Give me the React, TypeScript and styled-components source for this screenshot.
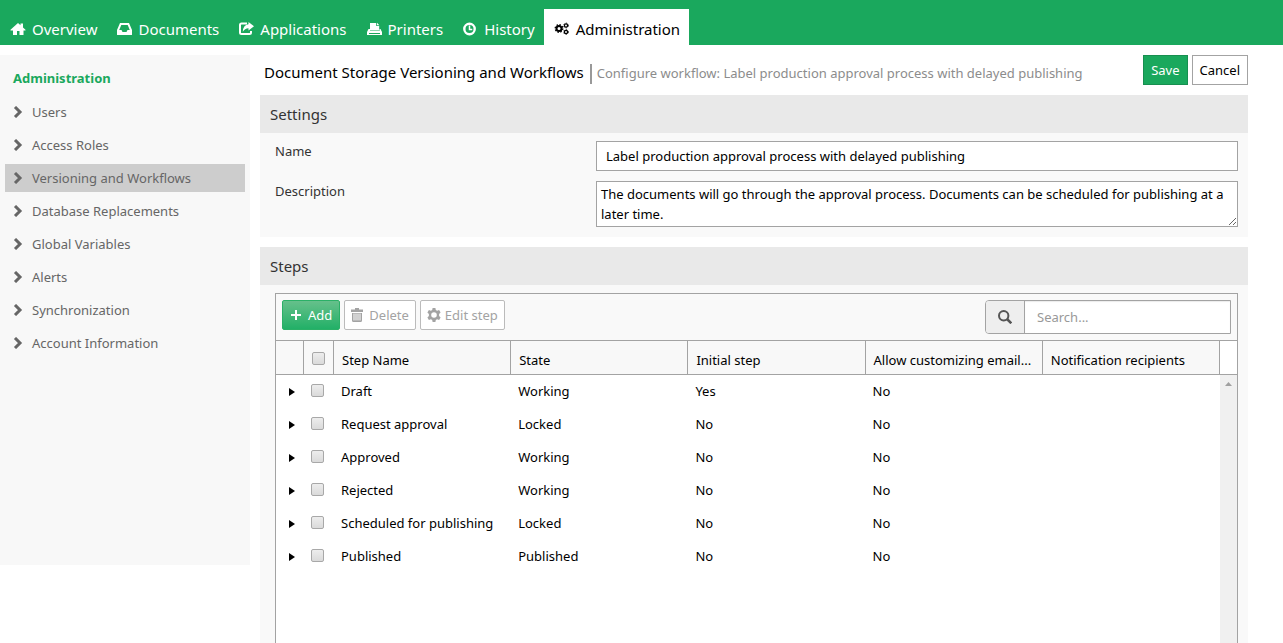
import React, { useState } from 'react';
import styled, { createGlobalStyle } from 'styled-components';

const green = '#1aa85d';
const line = '#a3a3a3';
const fontStack = '"Noto Sans", "Open Sans", sans-serif';

const GlobalStyle = createGlobalStyle`
  *, *::before, *::after { box-sizing: border-box; }
  body { margin: 0; background: #fff; color: #000; font: 13px/20px ${fontStack}; }
  button, input, textarea { font: inherit; color: inherit; border-radius: 0; }
`;

const Page = styled.div`
  display: flex;
  flex-direction: column;
  min-height: 100vh;
`;

const TopBar = styled.nav`
  display: flex;
  align-items: flex-end;
  height: 45px;
  background: ${green};
`;

const Tab = styled.a<{ $active?: boolean }>`
  display: flex;
  align-items: center;
  gap: 6px;
  height: 36px;
  padding: 4px 9px 0 10px;
  font-size: 15px;
  text-decoration: none;
  white-space: nowrap;
  color: ${(p) => (p.$active ? '#000' : '#fff')};
  background: ${(p) => (p.$active ? '#fff' : 'transparent')};
`;

const TabIcon = styled.svg`
  flex: none;
  width: 16px;
  height: 16px;
  fill: currentColor;
`;

const Columns = styled.div`
  display: flex;
  flex: 1;
  gap: 10px;
  padding: 10px 35px 0 0;
`;

const Sidebar = styled.aside`
  flex: none;
  align-self: flex-start;
  width: 250px;
  min-height: 510px;
  padding: 11px 5px;
  background: #f8f8f8;
`;

const SidebarTitle = styled.h2`
  margin: 0 0 8px;
  padding: 2px 8px;
  font-size: 13px;
  font-weight: 700;
  color: ${green};
`;

const SideList = styled.ul`
  display: flex;
  flex-direction: column;
  gap: 5px;
  margin: 0;
  padding: 0;
  list-style: none;
`;

const SideLink = styled.a<{ $active?: boolean }>`
  display: flex;
  align-items: center;
  gap: 9px;
  height: 28px;
  padding: 0 8px;
  color: #666;
  text-decoration: none;
  background: ${(p) => (p.$active ? '#cdcdcd' : 'transparent')};
`;

const Chevron = styled.svg`
  width: 10px;
  height: 12px;
  fill: none;
  stroke: #666;
  stroke-width: 3;
`;

const Main = styled.main`
  display: flex;
  flex-direction: column;
  flex: 1;
  min-width: 0;
`;

const TitleRow = styled.header`
  display: flex;
  align-items: flex-start;
  gap: 4px;
  height: 40px;
`;

const Title = styled.h1`
  margin: 0;
  padding: 7px 2px 0 4px;
  font-size: 15px;
  font-weight: 400;
  line-height: 20px;
  white-space: nowrap;
`;

const Subtitle = styled.div`
  flex: 1;
  min-width: 0;
  margin-top: 9px;
  padding-left: 5px;
  height: 20px;
  line-height: 18px;
  border-left: 2px solid #999;
  color: #8c8c8c;
  white-space: nowrap;
`;

const ActionButton = styled.button<{ $primary?: boolean }>`
  height: 30px;
  padding: 0 7px;
  border: 1px solid ${(p) => (p.$primary ? '#178f50' : line)};
  background: ${(p) => (p.$primary ? green : '#fff')};
  color: ${(p) => (p.$primary ? '#fff' : '#000')};
`;

const Panel = styled.section<{ $grow?: boolean }>`
  display: flex;
  flex-direction: column;
  flex: ${(p) => (p.$grow ? '1' : 'none')};
  background: #f9f9f9;
`;

const PanelTitle = styled.h2`
  margin: 0;
  padding: 9px 10px;
  font-size: 15px;
  font-weight: 400;
  line-height: 20px;
  color: #333;
  background: #e9e9e9;
`;

const Form = styled.div`
  display: grid;
  grid-template-columns: 1fr 2fr;
  gap: 10px 0;
  padding: 8px 10px 10px 15px;
`;

const FieldLabel = styled.label`
  color: #333;
`;

const TextField = styled.input`
  width: 100%;
  height: 30px;
  padding: 0 9px;
  border: 1px solid ${line};
  background: #fff;
`;

const TextBox = styled.textarea`
  display: block;
  width: 100%;
  height: 46px;
  padding: 2px 4px;
  border: 1px solid ${line};
  background: #fff;
  overflow: hidden;
`;

const Divider = styled.div`
  height: 10px;
  background: #fff;
`;

const Grid = styled.div`
  display: flex;
  flex-direction: column;
  flex: 1;
  margin: 8px 10px 0 15px;
  border: 1px solid ${line};
  border-bottom: 0;
`;

const Toolbar = styled.div`
  display: flex;
  align-items: flex-start;
  gap: 4px;
  height: 46px;
  padding: 6px;
`;

const ToolButton = styled.button<{ $primary?: boolean }>`
  display: flex;
  align-items: center;
  gap: 4px;
  height: 30px;
  padding: 0 ${(p) => (p.$primary ? '7px' : '6px')};
  border: 1px solid ${(p) => (p.$primary ? '#2bb067' : '#bbb')};
  border-radius: 2px;
  background: ${(p) => (p.$primary ? 'linear-gradient(#66c08b, #22b067)' : '#fff')};
  color: ${(p) => (p.$primary ? '#fff' : '#a3a3a3')};
  white-space: nowrap;
`;

const ToolIcon = styled.svg`
  width: 14px;
  height: 14px;
  fill: currentColor;
`;

const Search = styled.div`
  display: flex;
  width: 246px;
  height: 34px;
  margin-left: auto;
  border: 1px solid ${line};
  border-radius: 4px 0 0 4px;
  overflow: hidden;
`;

const SearchButton = styled.button`
  display: flex;
  align-items: center;
  justify-content: center;
  flex: none;
  width: 39px;
  padding: 0;
  border: 0;
  border-right: 1px solid ${line};
  background: #eee;
  color: #555;
`;

const SearchInput = styled.input`
  flex: 1;
  min-width: 0;
  padding: 0 12px;
  border: 0;
  background: #fff;
  box-shadow: inset 0 1px 1px rgba(0, 0, 0, 0.08);
  &::placeholder { color: #999; opacity: 1; }
`;

const GridBody = styled.div`
  display: flex;
  flex: 1;
  background: #fff;
`;

const TableArea = styled.div`
  flex: 1;
  min-width: 0;
`;

const Table = styled.table`
  width: 100%;
  table-layout: fixed;
  border-collapse: separate;
  border-spacing: 0;
`;

const HeadCell = styled.th`
  height: 35px;
  padding: 4px 8px 0;
  border: solid ${line};
  border-width: 1px 1px 1px 0;
  background: #f8f8f8;
  font-weight: 400;
  text-align: left;
  white-space: nowrap;
  overflow: hidden;
  text-overflow: ellipsis;
`;

const Cell = styled.td`
  height: 33px;
  padding: 0 7px 2px;
  white-space: nowrap;
`;

const CheckHead = styled(HeadCell)`
  padding: 2px 8px 0;
  vertical-align: middle;
`;

const Check = styled.input`
  appearance: none;
  display: block;
  width: 13px;
  height: 13px;
  margin: 0;
  border: 1px solid #a8a8a8;
  border-radius: 2px;
  background: linear-gradient(#ededed, #dadada);
  &:checked { background: #777; }
`;

const Expand = styled.button`
  display: flex;
  padding: 3px 6px 0;
  border: 0;
  background: none;
`;

const ScrollTrack = styled.div`
  display: flex;
  flex-direction: column;
  flex: none;
  width: 17px;
  background: #f0f0f0;
`;

const ScrollHead = styled.div`
  height: 35px;
  border: solid ${line};
  border-width: 1px 0;
  background: #fff;
`;

const ScrollUp = styled.button`
  display: flex;
  align-items: center;
  justify-content: center;
  height: 17px;
  padding: 0;
  border: 0;
  background: none;
`;

const tabs = [
  {
    label: 'Overview',
    icon: <path d="M0.500 8.800 8 2l2.500 2.200V2.500H13v4L15.500 8.800V9.500H13.500V14H9.500V10H7v4H3V9.500H.5z" />,
  },
  {
    label: 'Documents',
    icon: (
      <path fillRule="evenodd" d="M4 2h9l3 7v4.500q0 .5-.5.5h-14q-.5 0-.5-.5V9zM5.300 4 3.200 9h2.300l1 2h4l1-2h2.300L11.700 4z" />
    ),
  },
  {
    label: 'Applications',
    icon: (
      <>
        <path d="M9 2.500H3.500Q2 2.500 2 4v7.500Q2 13 3.500 13h8q1.500 0 1.500-1.500V10" fill="none" stroke="currentColor" strokeWidth="2" />
        <path d="M10.500 1 16 5.300l-5.500 4.200V7.300Q7 7.200 4.800 10.800 5 4 10.500 3.300z" />
      </>
    ),
  },
  {
    label: 'Printers',
    icon: (
      <>
        <path d="M4 2h6.200v3h3v4.500H4z" />
        <path d="M11 1.800 13.400 4.200H11z" />
        <path fillRule="evenodd" d="M2.500 8H4v2h9.500V8h1L16 11v3H1v-3zM3 12v.9h11V12z" />
      </>
    ),
  },
  {
    label: 'History',
    icon: (
      <>
        <circle cx="7.500" cy="8" r="5.200" fill="none" stroke="currentColor" strokeWidth="2.400" />
        <path d="M7.500 4.500v4h2.800" fill="none" stroke="currentColor" strokeWidth="1.500" />
      </>
    ),
  },
  {
    label: 'Administration',
    icon: (
      <g fill="none" stroke="currentColor">
        <circle cx="5" cy="7.500" r="2.500" strokeWidth="2" />
        <circle cx="5" cy="7.500" r="3.800" strokeWidth="1.300" strokeDasharray="1.490 1.490" />
        <circle cx="12" cy="4.500" r="1.600" strokeWidth="1.300" />
        <circle cx="12" cy="4.500" r="2.400" strokeWidth="0.800" strokeDasharray="1.250 1.260" />
        <circle cx="12" cy="11" r="1.600" strokeWidth="1.300" />
        <circle cx="12" cy="11" r="2.400" strokeWidth="0.800" strokeDasharray="1.250 1.260" />
      </g>
    ),
  },
];

const sections = [
  'Users',
  'Access Roles',
  'Versioning and Workflows',
  'Database Replacements',
  'Global Variables',
  'Alerts',
  'Synchronization',
  'Account Information',
];

const headings = ['Step Name', 'State', 'Initial step', 'Allow customizing email...', 'Notification recipients'];

const steps = [
  ['Draft', 'Working', 'Yes', 'No', ''],
  ['Request approval', 'Locked', 'No', 'No', ''],
  ['Approved', 'Working', 'No', 'No', ''],
  ['Rejected', 'Working', 'No', 'No', ''],
  ['Scheduled for publishing', 'Locked', 'No', 'No', ''],
  ['Published', 'Published', 'No', 'No', ''],
];

export default function App() {
  const [name, setName] = useState('Label production approval process with delayed publishing');
  const [description, setDescription] = useState(
    'The documents will go through the approval process. Documents can be scheduled for publishing at a later time.'
  );

  return (
    <Page>
      <GlobalStyle />
      <TopBar>
        {tabs.map((tab) => (
          <Tab key={tab.label} href="#" $active={tab.label === 'Administration'}>
            <TabIcon viewBox="0 0 16 16" aria-hidden="true">{tab.icon}</TabIcon>
            {tab.label}
          </Tab>
        ))}
      </TopBar>
      <Columns>
        <Sidebar>
          <SidebarTitle>Administration</SidebarTitle>
          <SideList>
            {sections.map((section) => (
              <li key={section}>
                <SideLink href="#" $active={section === 'Versioning and Workflows'}>
                  <Chevron viewBox="0 0 10 12" aria-hidden="true">
                    <path d="M2 1 7 6 2 11" />
                  </Chevron>
                  {section}
                </SideLink>
              </li>
            ))}
          </SideList>
        </Sidebar>
        <Main>
          <TitleRow>
            <Title>Document Storage Versioning and Workflows</Title>
            <Subtitle>Configure workflow: Label production approval process with delayed publishing</Subtitle>
            <ActionButton $primary>Save</ActionButton>
            <ActionButton>Cancel</ActionButton>
          </TitleRow>
          <Panel>
            <PanelTitle>Settings</PanelTitle>
            <Form>
              <FieldLabel htmlFor="workflow-name">Name</FieldLabel>
              <TextField id="workflow-name" value={name} onChange={(e) => setName(e.target.value)} />
              <FieldLabel htmlFor="workflow-description">Description</FieldLabel>
              <TextBox
                id="workflow-description"
                value={description}
                onChange={(e) => setDescription(e.target.value)}
              />
            </Form>
          </Panel>
          <Divider />
          <Panel $grow>
            <PanelTitle>Steps</PanelTitle>
            <Grid>
              <Toolbar>
                <ToolButton $primary>
                  <ToolIcon viewBox="0 0 14 14" aria-hidden="true">
                    <path d="M5 2h2v4h4v2H7v4H5V8H1V6h4z" />
                  </ToolIcon>
                  Add
                </ToolButton>
                <ToolButton disabled>
                  <ToolIcon viewBox="0 0 14 14" aria-hidden="true">
                    <path fillRule="evenodd" d="M4 0h4v1.500h4V4H0V1.500h4zM1 5h10v7.500Q11 14 9.500 14h-7Q1 14 1 12.500zM2.500 5.500v7h1v-7zm2 0v7h1v-7zm2 0v7h1v-7zm2 0v7h1v-7z" />
                  </ToolIcon>
                  Delete
                </ToolButton>
                <ToolButton disabled>
                  <ToolIcon viewBox="0 0 14 14" aria-hidden="true">
                    <path fillRule="evenodd" d="M5.600 0h2.800l.4 2 1.300.8 2-.7 1.500 2.400L12.100 6v2l1.500 1.500-1.500 2.400-2-.7-1.300.8-.4 2H5.600l-.4-2-1.300-.8-2 .7L.4 9.500 1.900 8V6L.4 4.500l1.500-2.400 2 .7L5.200 2zM7 4.200a2.800 2.800 0 1 0 0 5.600 2.800 2.800 0 0 0 0-5.600z" />
                  </ToolIcon>
                  Edit step
                </ToolButton>
                <Search role="search">
                  <SearchButton aria-label="Search">
                    <ToolIcon viewBox="0 0 14 14" aria-hidden="true">
                      <circle cx="5.700" cy="5.700" r="4.700" fill="none" stroke="currentColor" strokeWidth="2" />
                      <path d="m9 9 4.300 4.300" stroke="currentColor" strokeWidth="2.500" />
                    </ToolIcon>
                  </SearchButton>
                  <SearchInput type="text" aria-label="Search steps" placeholder="Search..." />
                </Search>
              </Toolbar>
              <GridBody>
                <TableArea>
                  <Table>
                    <colgroup>
                      <col width="28" />
                      <col width="30" />
                      {headings.map((heading) => (
                        <col key={heading} />
                      ))}
                    </colgroup>
                    <thead>
                      <tr>
                        <HeadCell aria-label="Details" />
                        <CheckHead>
                          <Check type="checkbox" aria-label="Select all steps" />
                        </CheckHead>
                        {headings.map((heading) => (
                          <HeadCell key={heading}>{heading}</HeadCell>
                        ))}
                      </tr>
                    </thead>
                    <tbody>
                      {steps.map((step) => (
                        <tr key={step[0]}>
                          <Cell>
                            <Expand aria-label={`Expand ${step[0]}`}>
                              <svg width="6" height="8" viewBox="0 0 6 8" aria-hidden="true">
                                <path d="M0 0l6 4-6 4z" />
                              </svg>
                            </Expand>
                          </Cell>
                          <Cell>
                            <Check type="checkbox" aria-label={`Select ${step[0]}`} />
                          </Cell>
                          {step.map((value, i) => (
                            <Cell key={headings[i]}>{value}</Cell>
                          ))}
                        </tr>
                      ))}
                    </tbody>
                  </Table>
                </TableArea>
                <ScrollTrack>
                  <ScrollHead />
                  <ScrollUp aria-label="Scroll up">
                    <svg width="7" height="4" viewBox="0 0 7 4" aria-hidden="true">
                      <path d="M0 4 3.500 0 7 4z" fill="#a0a0a0" />
                    </svg>
                  </ScrollUp>
                </ScrollTrack>
              </GridBody>
            </Grid>
          </Panel>
        </Main>
      </Columns>
    </Page>
  );
}
